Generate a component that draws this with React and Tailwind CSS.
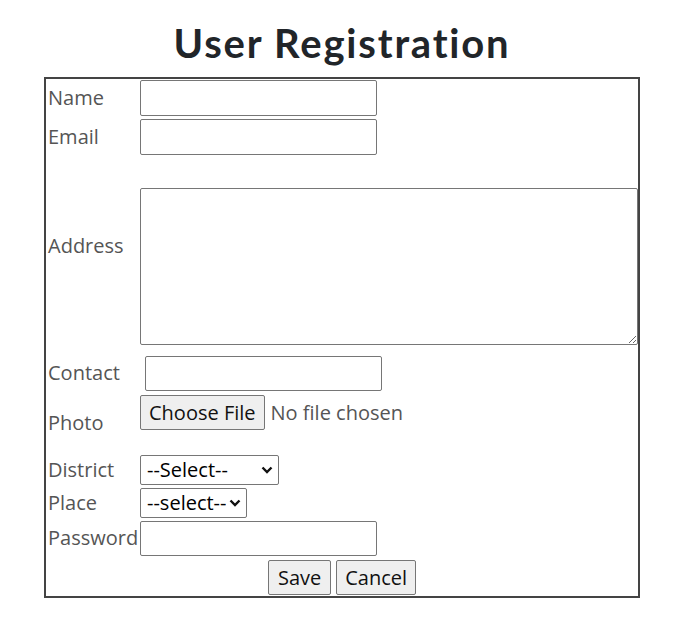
import React from 'react';

function Chevron() {
  return (
    <svg width="12" height="8" viewBox="0 0 12 8" className="absolute right-[6px] top-1/2 -translate-y-1/2 pointer-events-none">
      <path d="M1.5 1.5 L6 6 L10.5 1.5" fill="none" stroke="#111" strokeWidth="2.4" />
    </svg>
  );
}

function Select({ width, children }) {
  return (
    <div className={`relative ${width}`}>
      <select className="appearance-none w-full h-[30px] border border-[#767676] rounded-[2px] bg-white text-black pl-[6px] pr-[20px] leading-[28px]">
        {children}
      </select>
      <Chevron />
    </div>
  );
}

const label = 'w-[94px] pl-[2px] text-[#555] leading-[27px] shrink-0 -translate-y-[1px]';
const textInput = 'w-[237px] border border-[#767676] rounded-[2px] bg-white px-[4px] outline-none';
const btn = 'h-[35px] border border-[#767676] rounded-[2px] bg-[#efefef] text-[#111] leading-[27px]';

export default function App() {
  return (
    <div className="min-h-screen bg-white font-['Open_Sans',sans-serif] text-[20px]">
      <div className="ml-[44px] w-[596px] pt-[19px]">
        <h1 className="text-center font-['Lato',sans-serif] font-bold text-[40px] leading-[48px] tracking-[1.8px] text-[#212529]">
          User Registration
        </h1>

        <form className="mt-[10px] border-2 border-[#444] pt-[1px] pb-[1px] flex flex-col gap-[3px]">
          {/* Name */}
          <div className="flex items-center">
            <label className={label}>Name</label>
            <input type="text" className={`${textInput} h-[36px]`} />
          </div>

          {/* Email */}
          <div className="flex items-center">
            <label className={label}>Email</label>
            <input type="email" className={`${textInput} h-[36px]`} />
          </div>

          {/* Address */}
          <div className="flex items-start">
            <label className={`${label} mt-[75px]`}>Address</label>
            <textarea className="mt-[30px] w-[498px] h-[157px] border border-[#767676] rounded-[2px] bg-white outline-none" />
          </div>

          {/* Contact */}
          <div className="flex items-center pt-[8px]">
            <label className={label}>Contact</label>
            <input type="text" className={`${textInput} h-[35px] ml-[5px]`} />
          </div>

          {/* Photo */}
          <div className="flex items-start h-[58px]">
            <label className={`${label} mt-[16px]`}>Photo</label>
            <div className="flex items-center mt-[1px]">
              <button type="button" className={`${btn} px-[8px]`}>Choose File</button>
              <span className="ml-[6px] text-[#555] leading-[27px]">No file chosen</span>
            </div>
          </div>

          {/* District */}
          <div className="flex items-center">
            <label className={label}>District</label>
            <Select width="w-[139px]">
              <option>--Select--</option>
            </Select>
          </div>

          {/* Place */}
          <div className="flex items-center">
            <label className={label}>Place</label>
            <Select width="w-[107px]">
              <option>--select--</option>
            </Select>
          </div>

          {/* Password */}
          <div className="flex items-center">
            <label className={label}>Password</label>
            <input type="password" className={`${textInput} h-[35px]`} />
          </div>

          {/* Actions */}
          <div className="flex justify-center gap-[5px] pt-[1px]">
            <button type="submit" className={`${btn} px-[9px]`}>Save</button>
            <button type="button" className={`${btn} px-[8px]`}>Cancel</button>
          </div>
        </form>
      </div>
    </div>
  );
}
